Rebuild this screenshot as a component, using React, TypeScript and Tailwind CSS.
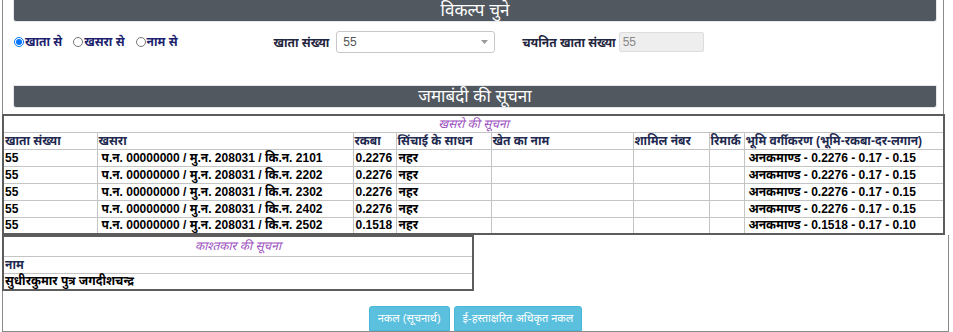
import React from "react";

const F = "font-['Liberation_Sans','Noto_Sans_Devanagari','Lohit_Devanagari','Mangal',sans-serif]";

const rows = [
  { k: "2101", r: "0.2276", c: "अनकमाण्ड - 0.2276 - 0.17 - 0.15" },
  { k: "2202", r: "0.2276", c: "अनकमाण्ड - 0.2276 - 0.17 - 0.15" },
  { k: "2302", r: "0.2276", c: "अनकमाण्ड - 0.2276 - 0.17 - 0.15" },
  { k: "2402", r: "0.2276", c: "अनकमाण्ड - 0.2276 - 0.17 - 0.15" },
  { k: "2502", r: "0.1518", c: "अनकमाण्ड - 0.1518 - 0.17 - 0.10" },
];

const heads = [
  "खाता संख्या",
  "खसरा",
  "रकबा",
  "सिंचाई के साधन",
  "खेत का नाम",
  "शामिल नंबर",
  "रिमार्क",
  "भूमि वर्गीकरण (भूमि-रकबा-दर-लगान)",
];

function Bar({ title }: { title: string }) {
  return (
    <div className="ml-[11px] w-[922px] h-[21px] bg-[#51585f] rounded-b-[2px] shadow-[0_0_0_1px_#e4e6e8] flex items-center justify-center text-white text-[17px] leading-none">
      {title}
    </div>
  );
}

export default function App() {
  return (
    <div className={`w-[953px] h-[332px] bg-white overflow-hidden ${F}`}>
      {/* Section A */}
      <div className="ml-[2px] w-[942px] h-[114px] border-x border-[#8a8a8a]">
        <Bar title="विकल्प चुने" />
        <div className="mt-[10px] h-[22px] flex items-start">
          <div className="ml-[11px] mt-[2px] flex items-center text-[#1c1f6e] font-bold text-[12px]">
            <label className="flex items-center">
              <input type="radio" name="opt" defaultChecked className="w-[10px] h-[10px] m-0 mr-[1px]" />
              <span>खाता से</span>
            </label>
            <label className="flex items-center ml-[11px]">
              <input type="radio" name="opt" className="w-[10px] h-[10px] m-0 mr-[1px]" />
              <span>खसरा से</span>
            </label>
            <label className="flex items-center ml-[11px]">
              <input type="radio" name="opt" className="w-[10px] h-[10px] m-0 mr-[1px]" />
              <span>नाम से</span>
            </label>
          </div>
          <div className="ml-[96px] mt-[3px] text-[12px] font-bold text-[#1f2640]">खाता संख्या</div>
          <div className="ml-[7px] w-[159px] h-[22px] border border-[#c8c8c8] rounded-[3px] flex items-center justify-between px-[6px] text-[12px] text-[#555]">
            <span>55</span>
            <svg width="7" height="4" viewBox="0 0 7 4"><path d="M0 0h7L3.5 4z" fill="#999" /></svg>
          </div>
          <div className="ml-[27px] mt-[3px] text-[12px] font-bold text-[#1f2640]">चयनित खाता संख्या</div>
          <div className="ml-[3px] mt-[1px] w-[85px] h-[20px] border border-[#ddd] rounded-[2px] bg-[#eeeeee] flex items-center px-[3px] text-[12px] text-[#888]">
            55
          </div>
        </div>
        <div className="mt-[33px]">
          <Bar title="जमाबंदी की सूचना" />
        </div>
      </div>

      {/* Table 1 */}
      <table className="ml-[2px] w-[942px] table-fixed border-collapse border-2 border-[#5c5c5c] text-[12px] leading-none">
        <colgroup>
          <col className="w-[94px]" />
          <col className="w-[256px]" />
          <col className="w-[43px]" />
          <col className="w-[95px]" />
          <col className="w-[142px]" />
          <col className="w-[76px]" />
          <col className="w-[35px]" />
          <col className="w-[200px]" />
        </colgroup>
        <tbody>
          <tr className="h-[17px]">
            <td colSpan={8} className="border border-[#c4c4c4] text-center italic text-[#9b4fc0] p-0">
              खसरो की सूचना
            </td>
          </tr>
          <tr className="h-[17px]">
            {heads.map((h, i) => (
              <td key={i} className="border border-[#c4c4c4] p-0 pl-[1px] font-bold text-[#1f2a50] whitespace-nowrap">
                {h}
              </td>
            ))}
          </tr>
          {rows.map((r, i) => (
            <tr key={i} className="h-[17px] font-bold text-black">
              <td className="border border-[#c4c4c4] p-0 pl-[1px]">55</td>
              <td className="border border-[#c4c4c4] p-0 pl-[4px] whitespace-nowrap">
                प.न. 00000000 / मु.न. 208031 / कि.न. {r.k}
              </td>
              <td className="border border-[#c4c4c4] p-0 pl-[2px]">{r.r}</td>
              <td className="border border-[#c4c4c4] p-0 pl-[2px]">नहर</td>
              <td className="border border-[#c4c4c4] p-0"></td>
              <td className="border border-[#c4c4c4] p-0"></td>
              <td className="border border-[#c4c4c4] p-0"></td>
              <td className="border border-[#c4c4c4] p-0 pl-[4px] whitespace-nowrap">{r.c}</td>
            </tr>
          ))}
        </tbody>
      </table>

      {/* Section B */}
      <div className="ml-[2px] w-[947px] h-[97px] border-x border-b border-[#8a8a8a] flex flex-col">
        <table className="-ml-[1px] w-[472px] table-fixed border-collapse border-2 border-[#5c5c5c] text-[12px] leading-none">
          <tbody>
            <tr className="h-[20px]">
              <td className="border border-[#c4c4c4] p-0 text-center italic text-[#9b4fc0]">काश्तकार की सूचना</td>
            </tr>
            <tr className="h-[17px]">
              <td className="border border-[#c4c4c4] p-0 pl-[1px] font-bold text-[#1f2a50]">नाम</td>
            </tr>
            <tr className="h-[17px]">
              <td className="border border-[#c4c4c4] p-0 pl-[1px] font-bold text-black">सुधीरकुमार पुत्र जगदीशचन्द्र</td>
            </tr>
          </tbody>
        </table>
        <div className="mt-auto flex justify-center gap-[4px]">
          <button className="h-[25px] px-[8px] bg-[#5bc0de] border border-[#46b8da] rounded-t-[3px] text-white text-[11px] leading-none">
            नकल (सूचनार्थ)
          </button>
          <button className="h-[25px] px-[8px] bg-[#5bc0de] border border-[#46b8da] rounded-t-[3px] text-white text-[11px] leading-none">
            ई-हस्ताक्षरित अधिकृत नकल
          </button>
        </div>
      </div>
    </div>
  );
}
